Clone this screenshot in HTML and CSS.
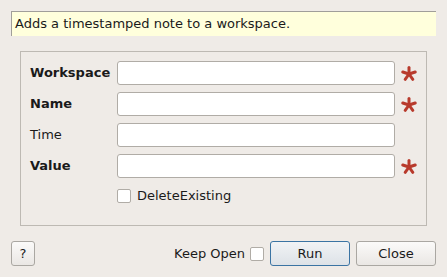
FILE: index.html
```html
<!DOCTYPE html>
<html>
<head>
<meta charset="utf-8">
<link rel="stylesheet" href="styles.css">
</head>
<body>
<div class="dialog">
  <div class="desc">Adds a timestamped note to a workspace.</div>
  <div class="group">
    <div class="form">
      <label class="lbl bold">Workspace</label>
      <input class="field" type="text">
      <span class="req"><svg width="16" height="16" viewBox="0 0 16 16"><g stroke="#b83a2c" stroke-width="3" stroke-linecap="round"><line x1="8" y1="8" x2="8" y2="1.5"/><line x1="8" y1="8" x2="14.2" y2="6"/><line x1="8" y1="8" x2="11.8" y2="13.3"/><line x1="8" y1="8" x2="4.2" y2="13.3"/><line x1="8" y1="8" x2="1.8" y2="6"/></g></svg></span>
      <label class="lbl bold">Name</label>
      <input class="field" type="text">
      <span class="req"><svg width="16" height="16" viewBox="0 0 16 16"><g stroke="#b83a2c" stroke-width="3" stroke-linecap="round"><line x1="8" y1="8" x2="8" y2="1.5"/><line x1="8" y1="8" x2="14.2" y2="6"/><line x1="8" y1="8" x2="11.8" y2="13.3"/><line x1="8" y1="8" x2="4.2" y2="13.3"/><line x1="8" y1="8" x2="1.8" y2="6"/></g></svg></span>
      <label class="lbl">Time</label>
      <input class="field" type="text">
      <span class="req"></span>
      <label class="lbl bold">Value</label>
      <input class="field" type="text">
      <span class="req"><svg width="16" height="16" viewBox="0 0 16 16"><g stroke="#b83a2c" stroke-width="3" stroke-linecap="round"><line x1="8" y1="8" x2="8" y2="1.5"/><line x1="8" y1="8" x2="14.2" y2="6"/><line x1="8" y1="8" x2="11.8" y2="13.3"/><line x1="8" y1="8" x2="4.2" y2="13.3"/><line x1="8" y1="8" x2="1.8" y2="6"/></g></svg></span>
      <span></span>
      <div class="check-row"><span class="box"></span><span>DeleteExisting</span></div>
      <span></span>
    </div>
  </div>
  <div class="footer">
    <button class="btn help">?</button>
    <div class="spacer"></div>
    <span class="keep">Keep Open</span>
    <span class="box keep-box"></span>
    <button class="btn run">Run</button>
    <button class="btn">Close</button>
  </div>
</div>
</body>
</html>
```

FILE: styles.css
```css
* { box-sizing: border-box; }
html, body {
  margin: 0;
  padding: 0;
  background: #efebe7;
  font-family: "DejaVu Sans", sans-serif;
  font-size: 13px;
  color: #1a1a1a;
}
.dialog {
  width: 447px;
  height: 277px;
  padding: 11px 11px 0 11px;
  display: flex;
  flex-direction: column;
}
.desc {
  height: 25px;
  background: #ffffdc;
  border-top: 1px solid #a09e9a;
  border-left: 1px solid #a09e9a;
  padding: 4px 0 0 3px;
  line-height: 16px;
}
.group {
  margin: 15px 9px 0 9px;
  height: 175px;
  border: 1px solid #bdb9b3;
  padding: 9px 0 0 9px;
}
.form {
  display: grid;
  grid-template-columns: 87px 278px 32px;
  grid-auto-rows: 24px;
  row-gap: 7px;
  align-items: center;
}
.lbl { line-height: 16px; }
.bold { font-weight: bold; }
.field {
  height: 24px;
  width: 278px;
  border: 1px solid #b0aca6;
  border-radius: 3px;
  background: #fff;
  margin: 0;
  padding: 0 4px;
  font: inherit;
}
.req {
  display: flex;
  align-items: center;
  justify-content: flex-start;
  height: 24px;
  padding: 2px 0 0 6px;
}
.check-row {
  display: flex;
  align-items: center;
  gap: 6px;
  margin-top: -3px;
}
.box {
  display: inline-block;
  width: 14px;
  height: 14px;
  border: 1px solid #b0aca6;
  border-radius: 2px;
  background: #fff;
}
.footer {
  margin-top: 15px;
  display: flex;
  align-items: center;
  height: 25px;
}
.spacer { flex: 1; }
.btn {
  height: 25px;
  width: 80px;
  margin: 0;
  padding: 0;
  border: 1px solid #aaa7a2;
  border-radius: 3px;
  background: linear-gradient(#fbfaf9, #eae7e4);
  font: inherit;
  color: #1a1a1a;
}
.help { width: 24px; }
.keep { margin-right: 5px; }
.keep-box { margin-right: 6px; }
.run {
  border-color: #3b74a3;
  background: linear-gradient(#f1f3f5, #dde2e7);
  margin-right: 6px;
}
```
